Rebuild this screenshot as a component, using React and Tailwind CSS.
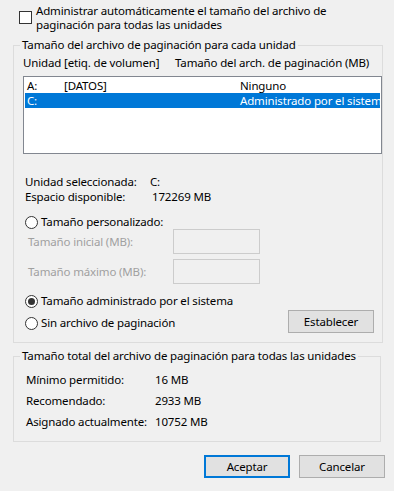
import React from 'react';

const Radio = ({ checked }) => (
  <span className="flex h-[13px] w-[13px] shrink-0 items-center justify-center rounded-full border border-[#333333] bg-white">
    {checked && <span className="h-[7px] w-[7px] rounded-full bg-[#333333]" />}
  </span>
);

const Button = ({ children, primary }) => (
  <button
    className={
      primary
        ? 'h-[23px] w-[86px] border-2 border-[#0078d7] bg-[#e1e1e1] text-black'
        : 'h-[23px] w-[86px] border border-[#adadad] bg-[#e1e1e1] text-black'
    }
  >
    {children}
  </button>
);

const App = () => {
  return (
    <div
      className="h-[491px] w-[394px] overflow-hidden whitespace-nowrap bg-[#f0f0f0] text-[11.5px] tracking-[-0.15px] text-black"
      style={{ fontFamily: '"Noto Sans", "Liberation Sans", sans-serif' }}
    >
      {/* auto manage checkbox */}
      <div className="flex pt-[4px] pl-[19px]">
        <span className="mt-[7px] h-[13px] w-[13px] shrink-0 border border-[#333333] bg-white" />
        <div className="ml-[4px] leading-[14px]">
          Administrar automáticamente el tamaño del archivo de
          <br />
          paginación para todas las unidades
        </div>
      </div>

      {/* per drive */}
      <fieldset className="mt-[6px] ml-[13px] w-[368px] border border-[#dcdcdc] pt-[4px] pb-[9px]">
        <legend className="ml-[6px] px-[2px] leading-[14px]">Tamaño del archivo de paginación para cada unidad</legend>
        <div className="flex h-[14px] pl-[9px] leading-[14px]">
          <span className="w-[152px] shrink-0">Unidad [etiq. de volumen]</span>
          <span>Tamaño del arch. de paginación (MB)</span>
        </div>
        <div className="mt-[6px] ml-[9px] h-[78px] w-[359px] overflow-hidden border border-[#828790] bg-white px-[1px] pt-[1px]">
          <div className="flex h-[15px] leading-[15px]">
            <span className="w-[39px] shrink-0 pl-[2px]">A:</span>
            <span className="w-[176px] shrink-0">[DATOS]</span>
            <span>Ninguno</span>
          </div>
          <div className="flex h-[15px] bg-[#0078d7] leading-[15px] text-white">
            <span className="w-[39px] shrink-0 pl-[2px]">C:</span>
            <span className="w-[176px] shrink-0"></span>
            <span>Administrado por el sistema</span>
          </div>
        </div>

        <div className="mt-[20px] pl-[11px] leading-[15px]">
          <div className="flex h-[15px]">
            <span className="w-[125px] shrink-0">Unidad seleccionada:</span>
            <span>C:</span>
          </div>
          <div className="flex h-[15px]">
            <span className="w-[127px] shrink-0">Espacio disponible:</span>
            <span>172269 MB</span>
          </div>
        </div>

        <div className="mt-[11px] flex h-[14px] items-center gap-[3px] pl-[11px] leading-[14px]">
          <Radio />
          <span>Tamaño personalizado:</span>
        </div>
        <div className="flex h-[25px] items-center pl-[14px] text-[#a0a0a0]">
          <span className="w-[145px] shrink-0">Tamaño inicial (MB):</span>
          <span className="h-[25px] w-[87px] shrink-0 border border-[#cccccc]" />
        </div>
        <div className="mt-[5px] flex h-[25px] items-center pl-[14px] text-[#a0a0a0]">
          <span className="w-[145px] shrink-0">Tamaño máximo (MB):</span>
          <span className="h-[25px] w-[87px] shrink-0 border border-[#cccccc]" />
        </div>

        <div className="mt-[10px] flex h-[14px] items-center gap-[3px] pl-[11px] leading-[14px]">
          <Radio checked />
          <span>Tamaño administrado por el sistema</span>
        </div>
        <div className="mt-[2px] flex h-[23px] pl-[11px]">
          <div className="mt-[6px] flex h-[14px] items-center gap-[3px] leading-[14px]">
            <Radio />
            <span>Sin archivo de paginación</span>
          </div>
          <div className="ml-auto mr-[8px]">
            <Button>Establecer</Button>
          </div>
        </div>
      </fieldset>

      {/* totals */}
      <fieldset className="mt-[6px] ml-[13px] w-[368px] border border-[#dcdcdc] pt-[6px] pb-[9px]">
        <legend className="ml-[6px] px-[2px] leading-[14px]">Tamaño total del archivo de paginación para todas las unidades</legend>
        <div className="pl-[12px] leading-[21px]">
          <div className="flex h-[21px]">
            <span className="w-[129px] shrink-0">Mínimo permitido:</span>
            <span>16 MB</span>
          </div>
          <div className="flex h-[21px]">
            <span className="w-[129px] shrink-0">Recomendado:</span>
            <span>2933 MB</span>
          </div>
          <div className="flex h-[21px]">
            <span className="w-[129px] shrink-0">Asignado actualmente:</span>
            <span>10752 MB</span>
          </div>
        </div>
      </fieldset>

      <div className="mt-[13px] flex justify-end gap-[9px] pr-[9px]">
        <Button primary>Aceptar</Button>
        <Button>Cancelar</Button>
      </div>
    </div>
  );
};

export default App;
